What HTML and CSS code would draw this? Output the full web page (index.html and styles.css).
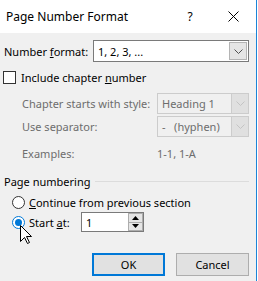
FILE: index.html
```html
<!DOCTYPE html>
<html>
<head>
    <title>Page Number Format</title>
    <link rel="stylesheet" href="styles.css">
</head>
<body>
    <div class="dialog">
        <div class="titlebar">
            <span class="title">Page Number Format</span>
            <span class="help">?</span>
            <span class="close">
                <svg width="11" height="11" viewBox="0 0 11 11"><path d="M0.5 0.5 L10.5 10.5 M10.5 0.5 L0.5 10.5" stroke="#000" stroke-width="1"/></svg>
            </span>
        </div>
        <div class="content">
            <div class="row format-row">
                <span class="label wide">Number <u>f</u>ormat:</span>
                <div class="combo format-combo">
                    <span class="value">1, 2, 3, ...</span>
                    <span class="arrow">
                        <svg width="9" height="5" viewBox="0 0 9 5"><path d="M0.5 0.5 L4.5 4.5 L8.5 0.5" fill="none" stroke="#505050"/></svg>
                    </span>
                </div>
            </div>
            <div class="check-row">
                <span class="checkbox"></span>
                <span>Include chapter <u>n</u>umber</span>
            </div>
            <div class="sub">
                <div class="row sub-row first">
                    <span class="label sub-label">Chapter starts with style:</span>
                    <div class="combo off">
                        <span class="value">Heading 1</span>
                        <span class="arrow">
                            <svg width="9" height="5" viewBox="0 0 9 5"><path d="M0.5 0.5 L4.5 4.5 L8.5 0.5" fill="none" stroke="#c4c4c4"/></svg>
                        </span>
                    </div>
                </div>
                <div class="row sub-row">
                    <span class="label sub-label">Use separator:</span>
                    <div class="combo off">
                        <span class="value">-&nbsp;&nbsp;&nbsp;(hyphen)</span>
                        <span class="arrow">
                            <svg width="9" height="5" viewBox="0 0 9 5"><path d="M0.5 0.5 L4.5 4.5 L8.5 0.5" fill="none" stroke="#c4c4c4"/></svg>
                        </span>
                    </div>
                </div>
                <div class="row examples-row">
                    <span class="label sub-label">Examples:</span>
                    <span>1-1, 1-A</span>
                </div>
            </div>
            <div class="group-title">
                <span>Page numbering</span>
                <span class="group-line"></span>
            </div>
            <div class="radio-row continue-row">
                <span class="radio"></span>
                <span><u>C</u>ontinue from previous section</span>
            </div>
            <div class="radio-row start-row">
                <span class="radio checked"></span>
                <span class="start-label">Start <u>a</u>t:</span>
                <div class="spin">
                    <span class="value">1</span>
                    <span class="spin-buttons">
                        <span class="spin-btn"><svg width="7" height="4" viewBox="0 0 7 4"><path d="M0 4 L3.5 0 L7 4 Z" fill="#000"/></svg></span>
                        <span class="spin-btn"><svg width="7" height="4" viewBox="0 0 7 4"><path d="M0 0 L3.5 4 L7 0 Z" fill="#000"/></svg></span>
                    </span>
                </div>
            </div>
            <div class="buttons">
                <button class="button default">OK</button>
                <button class="button">Cancel</button>
            </div>
        </div>
    </div>
    <svg class="cursor" width="13" height="20" viewBox="0 0 13 20">
        <path d="M0.5 0.5 L0.5 16.5 L4.5 12.5 L7.5 18.5 L9.5 17.5 L6.5 11.5 L11.5 11.5 Z" fill="#fff" stroke="#000" stroke-width="1" stroke-linejoin="miter"/>
    </svg>
</body>
</html>
```

FILE: styles.css
```css
body {
    margin: 0;
    padding: 0;
    background-color: #fff;
    font-family: "Noto Sans", "Open Sans", sans-serif;
    font-size: 11px;
    color: #000;
    overflow: hidden;
    white-space: nowrap;
}
.dialog {
    width: 256px;
    height: 281px;
    border-right: 1px solid #1c84d8;
    background-color: #f0f0f0;
}
.titlebar {
    height: 33px;
    display: flex;
    align-items: center;
    background-color: #fff;
}
.title {
    flex: 1;
    padding-left: 6px;
    font-size: 12px;
}
.help {
    width: 30px;
    text-align: center;
    font-size: 12px;
}
.close {
    width: 46px;
    margin-left: 5px;
    display: flex;
    justify-content: center;
}
.content {
    display: flex;
    flex-direction: column;
    padding: 0 7px 0 4px;
}
.row {
    display: flex;
    align-items: center;
}
.label {
    flex-shrink: 0;
}
.label.wide {
    width: 89px;
}
.format-row {
    margin-top: 7px;
}
.combo {
    display: flex;
    align-items: stretch;
    box-sizing: border-box;
    height: 22px;
    border: 1px solid #7a7a7a;
    background-color: #fff;
    flex-shrink: 0;
}
.combo .value {
    flex: 1;
    display: flex;
    align-items: center;
    padding-left: 4px;
}
.combo .arrow {
    width: 16px;
    display: flex;
    align-items: center;
    justify-content: center;
    background-color: #e5e5e5;
    border: 1px solid #b4b4b4;
    margin: 1px;
}
.format-combo {
    width: 156px;
}
.check-row {
    display: flex;
    align-items: center;
    height: 13px;
    margin-top: 9px;
    margin-left: -1px;
}
.checkbox {
    width: 13px;
    height: 13px;
    box-sizing: border-box;
    border: 1px solid #333;
    background-color: #fff;
    margin-right: 5px;
}
.sub {
    padding-left: 18px;
    color: #6d6d6d;
}
.sub-label {
    width: 135px;
}
.sub-row.first {
    margin-top: 9px;
}
.sub-row {
    margin-top: 2px;
}
.combo.off {
    width: 92px;
    height: 21px;
    border-color: #cccccc;
    background-color: #f0f0f0;
}
.combo.off .arrow {
    background-color: #e0e0e0;
    border-color: #cccccc;
    margin: 0;
    border-top: none;
    border-bottom: none;
    border-right: none;
}
.examples-row {
    height: 16px;
    margin-top: 8px;
}
.group-title {
    display: flex;
    align-items: center;
    height: 16px;
    margin-top: 12px;
}
.group-line {
    flex: 1;
    height: 1px;
    background-color: #dcdcdc;
    margin-left: 5px;
}
.radio-row {
    display: flex;
    align-items: center;
    padding-left: 8px;
}
.continue-row {
    height: 16px;
    margin-top: 5px;
}
.start-row {
    height: 20px;
    margin-top: 2px;
}
.radio {
    width: 13px;
    height: 13px;
    box-sizing: border-box;
    border: 1px solid #333;
    border-radius: 50%;
    background-color: #fff;
    margin-right: 4px;
    display: flex;
    align-items: center;
    justify-content: center;
    flex-shrink: 0;
}
.radio.checked {
    border-color: #0078d7;
}
.radio.checked::after {
    content: "";
    width: 7px;
    height: 7px;
    border-radius: 50%;
    background-color: #0078d7;
}
.start-label {
    width: 52px;
}
.spin {
    width: 63px;
    height: 20px;
    box-sizing: border-box;
    border: 1px solid #7a7a7a;
    background-color: #fff;
    display: flex;
}
.spin .value {
    flex: 1;
    padding-left: 4px;
    display: flex;
    align-items: center;
}
.spin-buttons {
    width: 15px;
    display: flex;
    flex-direction: column;
}
.spin-btn {
    flex: 1;
    display: flex;
    align-items: center;
    justify-content: center;
    background-color: #e5e5e5;
    border: 1px solid #adadad;
}
.spin-btn + .spin-btn {
    border-top: none;
}
.buttons {
    display: flex;
    justify-content: flex-end;
    gap: 11px;
    margin-top: 21px;
}
.button {
    width: 73px;
    height: 23px;
    box-sizing: border-box;
    background-color: #e1e1e1;
    border: 1px solid #adadad;
    font-family: "Noto Sans", "Open Sans", sans-serif;
    font-size: 11px;
    color: #000;
    padding: 0;
}
.button.default {
    border: 2px solid #0078d7;
}
.cursor {
    position: absolute;
    left: 20px;
    top: 225px;
}
```
